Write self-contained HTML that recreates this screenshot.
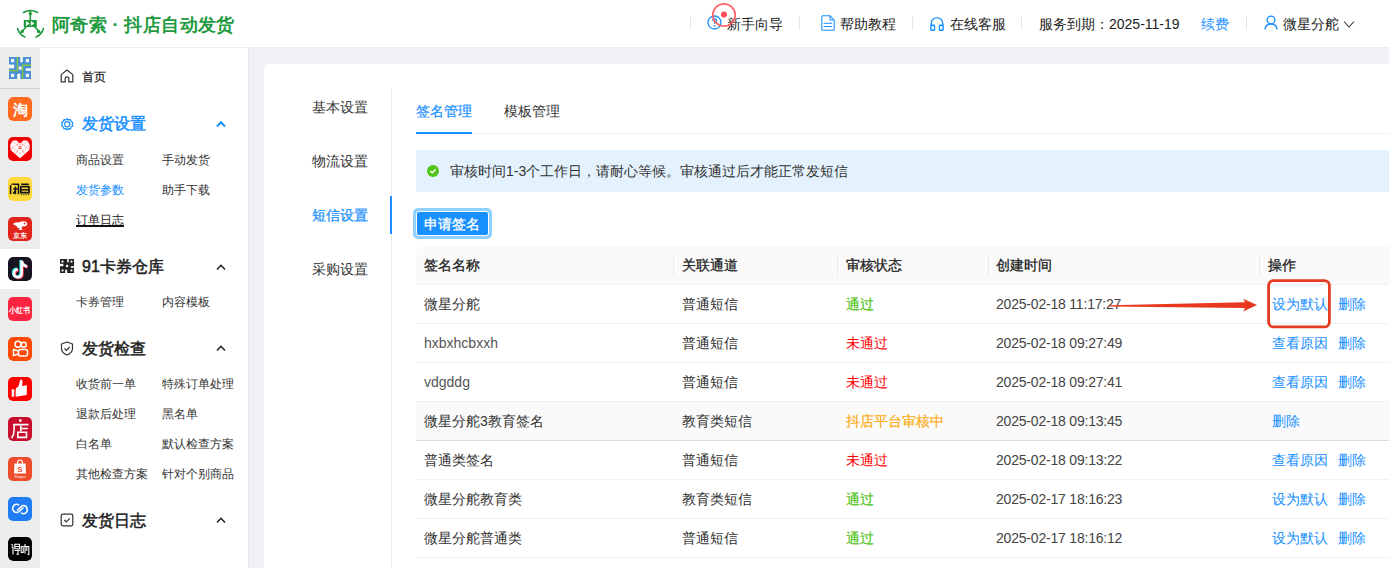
<!DOCTYPE html>
<html><head><meta charset="utf-8">
<style>
*{box-sizing:border-box;margin:0;padding:0}
html,body{width:1389px;height:568px;overflow:hidden;background:#f0f2f5;font-family:"Liberation Sans",sans-serif;color:#333;font-size:14px}
.a{position:absolute;white-space:nowrap;line-height:20px}
#hdr{position:absolute;left:0;top:0;width:1389px;height:48px;background:#fff;color:#222;border-bottom:1px solid #ededed}
#hdr .a{top:14px}
.sep{position:absolute;width:1px;height:13px;top:17px;background:#e4e4e4}
#strip{position:absolute;left:0;top:48px;width:40px;height:520px;background:#ececec}
#side{position:absolute;left:40px;top:48px;width:209px;height:520px;background:#fff;border-right:1px solid #e6e6e6}
#card{position:absolute;left:264px;top:64px;width:1140px;height:520px;background:#fff;border-radius:6px}
.ic{position:absolute;width:24px;height:24px;border-radius:5px;overflow:hidden}
.blue{color:#1890ff}
.sub{font-size:12px}
.grp{font-size:16px;font-weight:400;-webkit-text-stroke:0.5px currentColor}
.th{font-weight:400;color:#222;-webkit-text-stroke:0.3px #222}
.ok{color:#52c41a;-webkit-text-stroke:0.2px #52c41a}
.bad{color:#ff0000}
.pend{color:#faad14;-webkit-text-stroke:0.2px #faad14}
</style></head><body>
<div id="hdr">
  <svg style="position:absolute;left:14px;top:8px" width="34" height="32" viewBox="0 0 34 32">
    <g fill="none" stroke="#1f9a3f" stroke-width="1.6" stroke-linecap="round">
      <path d="M9.5 4.5 Q16.5 0.5 23.5 4.5"/>
      <path d="M16.3 3 V12"/>
      <path d="M12 19 L7 24.5"/>
      <path d="M21 19 L26 24.5"/>
      <path d="M3.5 20.5 Q5.5 27 11 29"/>
      <path d="M29.5 20.5 Q27.5 27 22 29"/>
    </g>
    <circle cx="16.3" cy="5.7" r="1.6" fill="#1f9a3f"/>
    <circle cx="8.2" cy="23.4" r="1.7" fill="#1f9a3f"/>
    <circle cx="24.6" cy="23.4" r="1.7" fill="#1f9a3f"/>
    <rect x="9.8" y="12" width="13" height="7" fill="#1f9a3f"/>
    <path d="M12.1 13.1 L15.6 15.5 L12.1 17.9Z M16.8 13.1 L20.3 15.5 L16.8 17.9Z" fill="#fff"/>
  </svg>
  <div class="a" style="left:52px;top:13px;font-size:18px;line-height:24px;font-weight:bold;color:#1f9a3f;letter-spacing:0.4px">阿奇索 · 抖店自动发货</div>

  <div class="sep" style="left:690px"></div>
  <svg style="position:absolute;left:707px;top:15px" width="15" height="15" viewBox="0 0 15 15"><circle cx="7.5" cy="7.5" r="6.5" fill="none" stroke="#1890ff" stroke-width="1.3"/><path d="M5.4 5.8 Q5.6 3.8 7.5 3.8 Q9.5 3.8 9.5 5.6 Q9.5 6.8 7.5 7.6 V8.8" fill="none" stroke="#1890ff" stroke-width="1.3"/><circle cx="7.5" cy="10.9" r="0.8" fill="#1890ff"/></svg>
  <div class="a" style="left:727px;top:14px">新手向导</div>
  <svg style="position:absolute;left:710px;top:1px" width="28" height="28" viewBox="0 0 28 28"><circle cx="14" cy="14" r="11.2" fill="none" stroke="#ff5a5f" stroke-width="1.8" opacity="0.9"/><circle cx="14" cy="13.5" r="3" fill="#ff4d55"/></svg>
  <div class="sep" style="left:799px"></div>
  <svg style="position:absolute;left:821px;top:15px" width="14" height="16" viewBox="0 0 14 16"><path d="M1.5 0.8 H9 L13.2 5 V14.2 Q13.2 15.2 12.2 15.2 H1.8 Q0.8 15.2 0.8 14.2 V1.8 Q0.8 0.8 1.8 0.8 Z" fill="none" stroke="#1890ff" stroke-width="1.05" stroke-linejoin="round"/><path d="M9 0.8 V4 Q9 5 10 5 H13.2" fill="none" stroke="#1890ff" stroke-width="1.05"/><path d="M2.6 8.3 H11 M2.6 11.5 H11" stroke="#1890ff" stroke-width="1"/></svg>
  <div class="a" style="left:840px;top:14px">帮助教程</div>
  <div class="sep" style="left:912px"></div>
  <svg style="position:absolute;left:930px;top:17px" width="14" height="14" viewBox="0 0 14 14"><path d="M1.3 9 V6.8 Q1.3 0.9 7 0.9 Q12.7 0.9 12.7 6.8 V9" fill="none" stroke="#1890ff" stroke-width="1.4"/><rect x="0.9" y="8.2" width="3.6" height="5" rx="0.5" fill="none" stroke="#1890ff" stroke-width="1.4"/><rect x="9.5" y="8.2" width="3.6" height="5" rx="0.5" fill="none" stroke="#1890ff" stroke-width="1.4"/></svg>
  <div class="a" style="left:950px;top:14px">在线客服</div>
  <div class="sep" style="left:1021px"></div>
  <div class="a" style="left:1039px;top:14px">服务到期：2025-11-19</div>
  <div class="a blue" style="left:1201px;top:14px">续费</div>
  <div class="sep" style="left:1246px"></div>
  <svg style="position:absolute;left:1264px;top:15px" width="14" height="15" viewBox="0 0 14 15"><circle cx="7" cy="5" r="3.9" fill="none" stroke="#1890ff" stroke-width="1.4"/><path d="M1 14.5 Q1.5 9 7 9 Q12.5 9 13 14.5" fill="none" stroke="#1890ff" stroke-width="1.4"/></svg>
  <div class="a" style="left:1283px;top:14px">微星分舵</div>
  <svg style="position:absolute;left:1343px;top:20px" width="12" height="9" viewBox="0 0 12 9"><path d="M1 1.5 L6 7 L11 1.5" fill="none" stroke="#333" stroke-width="1.1"/></svg>
</div>

<div id="strip">
  <div style="position:absolute;left:0;top:40px;width:40px;height:1px;background:#d2d2d2"></div>
  <div style="position:absolute;left:0;top:201px;width:40px;height:40px;background:#fff"></div>
  <svg style="position:absolute;left:9px;top:9px" width="22" height="22" viewBox="0 0 22 22">
    <rect width="22" height="22" fill="#4b8fd8"/>
    <g fill="#fbf8f2">
      <rect x="2" y="2" width="3.2" height="3.2"/><rect x="16.8" y="2" width="3.2" height="3.2"/><rect x="2" y="16.8" width="3.2" height="3.2"/><rect x="16.8" y="16.8" width="3.2" height="3.2"/>
      <rect x="11.3" y="0" width="2.5" height="5.2"/><rect x="0" y="7.6" width="5.2" height="3.7"/><rect x="16.8" y="11.3" width="5.2" height="2.5"/><rect x="8.2" y="16.8" width="3.1" height="5.2"/>
      <rect x="9.6" y="9.4" width="3.2" height="3.4" fill="#e9ecee"/>
    </g>
    <g stroke="#7cc442" stroke-width="1.5" fill="none">
      <path d="M8.4 0 V13.5 H0"/><path d="M22 8.2 H13.6 V22"/>
    </g>
  </svg>
  <!-- taobao -->
  <svg class="ic" style="left:8px;top:49px" width="24" height="24" viewBox="0 0 24 24"><rect width="24" height="24" rx="5" fill="#ff6a1e"/><text x="12" y="17.8" font-size="15" font-weight="bold" fill="#fff" text-anchor="middle">淘</text></svg>
  <!-- pdd -->
  <svg class="ic" style="left:8px;top:89px" width="24" height="24" viewBox="0 0 24 24"><rect width="24" height="24" rx="4" fill="#f00000"/><path d="M12 6.5 L8.5 3.3 L4.5 3.8 L2.2 8 L2.6 13 L12 21.2 L21.4 13 L21.8 8 L19.5 3.8 L15.5 3.3 Z" fill="#fff"/><g stroke="#f00000" stroke-width="0.7" opacity="0.7" fill="none"><path d="M2.5 8 L12 17 L21.5 8 M4.5 3.8 L12 11 L19.5 3.8 M2.6 13 L12 5 L21.4 13 M8.5 3.3 L16.5 17 M15.5 3.3 L7.5 17" stroke-dasharray="1.2 1"/></g><rect x="10.8" y="9.6" width="2.4" height="2.4" fill="#f00000" opacity="0.8"/><rect x="11.4" y="10.2" width="1.2" height="1.2" fill="#fff"/></svg>
  <!-- xianyu -->
  <svg class="ic" style="left:8px;top:129px" width="24" height="24" viewBox="0 0 24 24"><rect width="24" height="24" rx="4" fill="#ffd83c"/><g fill="none" stroke="#111" stroke-width="1.6"><path d="M2.6 8.2 V17.2"/><path d="M3.6 6.8 L4.4 7.6"/><path d="M5 7.3 H10.5 V17.2"/><path d="M5.2 12 H9.7 M7.4 9.6 V17.2 M5.2 16.6 L7.4 13.8"/><path d="M13.2 7.4 H20.8"/><path d="M12.8 9.8 H21 V15.6 H12.8 Z M12.8 12.7 H21"/></g><path d="M13 17.7 H21" stroke="#111" stroke-width="0.9" stroke-dasharray="1.2 1.1"/></svg>
  <!-- jd -->
  <svg class="ic" style="left:8px;top:169px" width="24" height="24" viewBox="0 0 24 24"><rect width="24" height="24" rx="4" fill="#e1251b"/><path d="M5 7 Q7 4.5 11 5.5 Q14 3.5 17 4.5 Q20 5.5 19 8 Q17 10 14 9.5 L13.5 12 L15 13 H10.5 L12 11.5 Q9 11 8 8.5 Q6.5 8.5 5 7Z" fill="#fff"/><circle cx="16.5" cy="6.5" r="0.9" fill="#e1251b"/><text x="12" y="21.3" font-size="6.8" font-weight="bold" fill="#fff" text-anchor="middle" letter-spacing="-0.3">京东</text></svg>
  <!-- tiktok -->
  <svg class="ic" style="left:8px;top:209px" width="24" height="24" viewBox="0 0 24 24"><rect width="24" height="24" rx="5" fill="#171320"/><g fill="none" stroke-width="2.6"><path d="M13.6 3.8 V16.3 Q13.6 20.2 9.8 20.2 Q6 20.2 6 16.3 Q6 12.5 9.8 12.5 M13.6 3.8 Q14.3 8.6 19 9.4" stroke="#25f4ee" transform="translate(-0.9,-0.7)"/><path d="M13.6 3.8 V16.3 Q13.6 20.2 9.8 20.2 Q6 20.2 6 16.3 Q6 12.5 9.8 12.5 M13.6 3.8 Q14.3 8.6 19 9.4" stroke="#fe2c55" transform="translate(0.9,0.7)"/><path d="M13.6 3.8 V16.3 Q13.6 20.2 9.8 20.2 Q6 20.2 6 16.3 Q6 12.5 9.8 12.5 M13.6 3.8 Q14.3 8.6 19 9.4" stroke="#fff"/></g></svg>
  <!-- xhs -->
  <svg class="ic" style="left:8px;top:249px" width="24" height="24" viewBox="0 0 24 24"><rect width="24" height="24" rx="4" fill="#ff2442"/><text x="1.3" y="15.6" font-size="8.2" font-weight="bold" fill="#fff" textLength="21.3" lengthAdjust="spacingAndGlyphs">小红书</text></svg>
  <!-- kuaishou -->
  <svg class="ic" style="left:8px;top:289px" width="24" height="24" viewBox="0 0 24 24"><rect width="24" height="24" rx="5" fill="#ff4906"/><g fill="none" stroke="#fff" stroke-width="1.5"><circle cx="10" cy="7.3" r="3"/><circle cx="15.7" cy="7.8" r="2.5"/><rect x="10.5" y="12.5" width="9" height="6.5" rx="2"/><path d="M10.5 14 L5.5 12.5 V18.5 L10.5 17"/></g></svg>
  <!-- thumbs -->
  <svg class="ic" style="left:8px;top:329px" width="24" height="24" viewBox="0 0 24 24"><rect width="24" height="24" rx="4" fill="#fe0000"/><path d="M3.7 12.2 H5.9 V19.7 H3.7Z" fill="#fff"/><path d="M6.6 12.2 H7.6 V19.6 H6.6Z" fill="#fff" opacity="0.6"/><path d="M8 11.3 L10.3 9.5 Q11.4 7 11.9 3.6 Q12.5 2.2 13.9 2.6 Q14.8 3.3 14.4 6 L14.1 8.9 L18.9 8.2 L18.7 17.9 L8.1 19.7 Z" fill="#fff"/></svg>
  <!-- dian -->
  <svg class="ic" style="left:8px;top:369px" width="24" height="24" viewBox="0 0 24 24"><rect width="24" height="24" rx="4" fill="#c8102e"/><circle cx="12.3" cy="3.6" r="1.4" fill="#fff"/><g fill="none" stroke="#fff" stroke-width="1.6"><path d="M5.2 7.6 H20.5"/><path d="M6.1 7.6 V13 Q6.1 18 3.6 21.2"/><path d="M12.8 8.5 V14.5 M12.8 11.5 H20"/><path d="M9.8 15.3 H18.5 V20.4 H9.8 Z"/></g></svg>
  <!-- shopee -->
  <svg class="ic" style="left:8px;top:409px" width="24" height="24" viewBox="0 0 24 24"><rect width="24" height="24" rx="4" fill="#ee4d2d"/><path d="M6.5 6.5 H17.5 L18 16.5 H6Z" fill="#fff"/><path d="M9.5 6.5 Q9.5 3 12 3 Q14.5 3 14.5 6.5" fill="none" stroke="#fff" stroke-width="1.2"/><text x="12" y="14.8" font-size="8" fill="#ee4d2d" text-anchor="middle" font-weight="bold">S</text><text x="12" y="20.8" font-size="3.2" fill="#fff" text-anchor="middle">Shopee</text></svg>
  <!-- blue -->
  <svg class="ic" style="left:8px;top:449px" width="24" height="24" viewBox="0 0 24 24"><rect width="24" height="24" rx="4" fill="#1f7cf4"/><g fill="none" stroke="#fff" stroke-width="1.6"><path d="M11 8.2 Q8.5 6.5 6.5 7.8 Q4 9.5 5 12.8 Q6 15.8 9 15.5 L10.5 15"/><path d="M13 15.8 Q15.5 17.5 17.5 16.2 Q20 14.5 19 11.2 Q18 8.2 15 8.5 L13.5 9"/><path d="M9 13.5 L14 8.8 M10.5 15.2 L15.5 10.5"/></g></svg>
  <!-- dewu -->
  <svg class="ic" style="left:8px;top:489px" width="24" height="24" viewBox="0 0 24 24"><rect width="24" height="24" rx="5" fill="#000"/><g fill="none" stroke="#fff" stroke-width="1.1"><path d="M3.5 7.3 L5 8.5 M3.3 10 H5 V17.5"/><path d="M6.8 7.3 H11.5 V11.7 H6.8 Z M6.8 9.5 H11.5 M6.5 13.5 H12 M10 12.5 V17.5 L8.5 17"/><path d="M13.2 9.5 V15.5 H15.2 V9.5 Z M17 7 V16.5 M16 9.5 H20.8 V17.5 L19.5 17.2 M18.8 9.5 V14"/></g></svg>
</div>
<div id="side"></div>
<div id="menu">
  <svg style="position:absolute;left:60px;top:69px" width="14" height="14" viewBox="0 0 14 14"><path d="M1.2 12.8 V5.6 L7 1 L12.8 5.6 V12.8 H8.8 V9.6 Q8.8 7.8 7 7.8 Q5.2 7.8 5.2 9.6 V12.8 Z" fill="none" stroke="#333" stroke-width="1.2" stroke-linejoin="round"/></svg>
  <div class="a sub" style="left:82px;top:67px;color:#222;-webkit-text-stroke:0.25px #222">首页</div>

  <svg style="position:absolute;left:61px;top:118px" width="12.5" height="12.5" viewBox="0 0 14 14"><path d="M7 0.8 L8.6 2.2 L10.7 1.9 L11.3 4 L13.2 5 L12.5 7 L13.2 9 L11.3 10 L10.7 12.1 L8.6 11.8 L7 13.2 L5.4 11.8 L3.3 12.1 L2.7 10 L0.8 9 L1.5 7 L0.8 5 L2.7 4 L3.3 1.9 L5.4 2.2 Z" fill="none" stroke="#1890ff" stroke-width="1.35" stroke-linejoin="round"/><circle cx="7" cy="7" r="2.9" fill="none" stroke="#1890ff" stroke-width="1.3"/></svg>
  <div class="a grp blue" style="left:82px;top:114px">发货设置</div>
  <svg style="position:absolute;left:216px;top:120px" width="10" height="8" viewBox="0 0 10 8"><path d="M1 6.5 L5 2.3 L9 6.5" fill="none" stroke="#1890ff" stroke-width="2"/></svg>
  <div class="a sub" style="left:76px;top:150px">商品设置</div>
  <div class="a sub" style="left:162px;top:150px">手动发货</div>
  <div class="a sub blue" style="left:76px;top:180px">发货参数</div>
  <div class="a sub" style="left:162px;top:180px">助手下载</div>
  <div class="a sub" style="left:76px;top:210px;color:#222">订单日志</div>
  <div style="position:absolute;left:76px;top:225px;width:48px;height:1.5px;background:#111"></div>

  <svg style="position:absolute;left:60px;top:259px" width="14" height="14" viewBox="0 0 22 22">
    <rect width="22" height="22" fill="#222"/>
    <g fill="#fff">
      <rect x="2.5" y="2.5" width="3" height="3"/><rect x="16.5" y="2.5" width="3" height="3"/><rect x="2.5" y="16.5" width="3" height="3"/><rect x="16.5" y="16.5" width="3" height="3"/>
      <rect x="11.3" y="0" width="2.5" height="5.2"/><rect x="0" y="7.6" width="5.2" height="3.7"/><rect x="16.8" y="11.3" width="5.2" height="2.5"/><rect x="8.2" y="16.8" width="3.1" height="5.2"/>
      <rect x="9.4" y="9.2" width="3.4" height="3.6"/>
    </g>
  </svg>
  <div class="a grp" style="left:82px;top:257px;color:#222">91卡券仓库</div>
  <svg style="position:absolute;left:216px;top:263px" width="10" height="8" viewBox="0 0 10 8"><path d="M1 6.5 L5 2.3 L9 6.5" fill="none" stroke="#222" stroke-width="1.6"/></svg>
  <div class="a sub" style="left:76px;top:292px">卡券管理</div>
  <div class="a sub" style="left:162px;top:292px">内容模板</div>

  <svg style="position:absolute;left:60px;top:341px" width="14" height="15" viewBox="0 0 14 15"><path d="M7 1 L12.5 3 V7.5 Q12.5 11.8 7 14 Q1.5 11.8 1.5 7.5 V3 Z" fill="none" stroke="#333" stroke-width="1.2" stroke-linejoin="round"/><path d="M4.5 7.5 L6.4 9.3 L9.6 6" fill="none" stroke="#333" stroke-width="1.2"/></svg>
  <div class="a grp" style="left:82px;top:339px;color:#222">发货检查</div>
  <svg style="position:absolute;left:216px;top:344px" width="10" height="8" viewBox="0 0 10 8"><path d="M1 6.5 L5 2.3 L9 6.5" fill="none" stroke="#222" stroke-width="1.6"/></svg>
  <div class="a sub" style="left:76px;top:374px">收货前一单</div>
  <div class="a sub" style="left:162px;top:374px">特殊订单处理</div>
  <div class="a sub" style="left:76px;top:404px">退款后处理</div>
  <div class="a sub" style="left:162px;top:404px">黑名单</div>
  <div class="a sub" style="left:76px;top:434px">白名单</div>
  <div class="a sub" style="left:162px;top:434px">默认检查方案</div>
  <div class="a sub" style="left:76px;top:464px">其他检查方案</div>
  <div class="a sub" style="left:162px;top:464px">针对个别商品</div>

  <svg style="position:absolute;left:60px;top:513px" width="14" height="14" viewBox="0 0 14 14"><rect x="1.2" y="1.2" width="11.6" height="11.6" rx="1.5" fill="none" stroke="#333" stroke-width="1.2"/><path d="M4.3 7 L6.3 9 L9.8 5.3" fill="none" stroke="#333" stroke-width="1.2"/></svg>
  <div class="a grp" style="left:82px;top:511px;color:#222">发货日志</div>
  <svg style="position:absolute;left:216px;top:516px" width="10" height="8" viewBox="0 0 10 8"><path d="M1 6.5 L5 2.3 L9 6.5" fill="none" stroke="#222" stroke-width="1.6"/></svg>
</div>
<div id="card"></div>
<div id="content">
  <div class="a" style="left:312px;top:97px">基本设置</div>
  <div class="a" style="left:312px;top:151px">物流设置</div>
  <div class="a blue" style="left:312px;top:205px;-webkit-text-stroke:0.25px #1890ff">短信设置</div>
  <div class="a" style="left:312px;top:259px">采购设置</div>
  <div style="position:absolute;left:391px;top:88px;width:1px;height:480px;background:#ebebeb"></div>
  <div style="position:absolute;left:390px;top:196px;width:2px;height:38px;background:#1890ff"></div>

  <div class="a blue" style="left:416px;top:101px;-webkit-text-stroke:0.2px #1890ff">签名管理</div>
  <div class="a" style="left:504px;top:101px">模板管理</div>
  <div style="position:absolute;left:416px;top:133px;width:973px;height:1px;background:#f0f0f0"></div>
  <div style="position:absolute;left:416px;top:132px;width:56px;height:2px;background:#1890ff"></div>

  <div style="position:absolute;left:416px;top:150px;width:973px;height:42px;background:#e3f2fd"></div>
  <svg style="position:absolute;left:427px;top:165px" width="12" height="12" viewBox="0 0 12 12"><circle cx="6" cy="6" r="6" fill="#52c41a"/><path d="M3.4 6.1 L5.2 7.8 L8.6 4.4" fill="none" stroke="#fff" stroke-width="1.4"/></svg>
  <div class="a" style="left:450px;top:161px">审核时间1-3个工作日，请耐心等候。审核通过后才能正常发短信</div>

  <div style="position:absolute;left:413px;top:208px;width:79px;height:31px;border-radius:5px;background:#91d0ff"></div>
  <div style="position:absolute;left:416px;top:211px;width:73px;height:25px;border-radius:3px;background:#1890ff;border:1px solid #fff"></div>
  <div class="a" style="left:424px;top:214px;color:#fff;-webkit-text-stroke:0.3px #fff">申请签名</div>

  <div style="position:absolute;left:416px;top:246px;width:973px;height:39px;background:#fafafa;border-top-left-radius:8px;border-bottom:1px solid #f0f0f0"></div>
  <div style="position:absolute;left:673px;top:254px;width:1px;height:22px;background:#ececec"></div>
  <div style="position:absolute;left:837px;top:254px;width:1px;height:22px;background:#ececec"></div>
  <div style="position:absolute;left:988px;top:254px;width:1px;height:22px;background:#ececec"></div>
  <div style="position:absolute;left:1259px;top:254px;width:1px;height:22px;background:#ececec"></div>
  <div class="a th" style="left:424px;top:255px">签名名称</div>
  <div class="a th" style="left:682px;top:255px">关联通道</div>
  <div class="a th" style="left:846px;top:255px">审核状态</div>
  <div class="a th" style="left:996px;top:255px">创建时间</div>
  <div class="a th" style="left:1268px;top:255px">操作</div>
  <div style="position:absolute;left:416px;top:285px;width:973px;height:39px;background:#fff;border-bottom:1px solid #f0f0f0"></div>
  <div class="a" style="left:424px;top:294px">微星分舵</div>
  <div class="a" style="left:682px;top:294px">普通短信</div>
  <div class="a ok" style="left:846px;top:294px">通过</div>
  <div class="a" style="left:996px;top:294px;color:#444;letter-spacing:-0.2px">2025-02-18 11:17:27</div>
  <div class="a blue" style="left:1272px;top:294px">设为默认</div>
  <div class="a blue" style="left:1338px;top:294px">删除</div>
  <div style="position:absolute;left:416px;top:324px;width:973px;height:39px;background:#fff;border-bottom:1px solid #f0f0f0"></div>
  <div class="a" style="left:424px;top:333px;color:#555">hxbxhcbxxh</div>
  <div class="a" style="left:682px;top:333px">普通短信</div>
  <div class="a bad" style="left:846px;top:333px">未通过</div>
  <div class="a" style="left:996px;top:333px;color:#444;letter-spacing:-0.2px">2025-02-18 09:27:49</div>
  <div class="a blue" style="left:1272px;top:333px">查看原因</div>
  <div class="a blue" style="left:1338px;top:333px">删除</div>
  <div style="position:absolute;left:416px;top:363px;width:973px;height:39px;background:#fff;border-bottom:1px solid #f0f0f0"></div>
  <div class="a" style="left:424px;top:372px;color:#555">vdgddg</div>
  <div class="a" style="left:682px;top:372px">普通短信</div>
  <div class="a bad" style="left:846px;top:372px">未通过</div>
  <div class="a" style="left:996px;top:372px;color:#444;letter-spacing:-0.2px">2025-02-18 09:27:41</div>
  <div class="a blue" style="left:1272px;top:372px">查看原因</div>
  <div class="a blue" style="left:1338px;top:372px">删除</div>
  <div style="position:absolute;left:416px;top:402px;width:973px;height:39px;background:#fafafa;border-bottom:1px solid #dddddd"></div>
  <div class="a" style="left:424px;top:411px">微星分舵3教育签名</div>
  <div class="a" style="left:682px;top:411px">教育类短信</div>
  <div class="a pend" style="left:846px;top:411px">抖店平台审核中</div>
  <div class="a" style="left:996px;top:411px;color:#444;letter-spacing:-0.2px">2025-02-18 09:13:45</div>
  <div class="a blue" style="left:1272px;top:411px">删除</div>
  <div style="position:absolute;left:416px;top:441px;width:973px;height:39px;background:#fff;border-bottom:1px solid #f0f0f0"></div>
  <div class="a" style="left:424px;top:450px">普通类签名</div>
  <div class="a" style="left:682px;top:450px">普通短信</div>
  <div class="a bad" style="left:846px;top:450px">未通过</div>
  <div class="a" style="left:996px;top:450px;color:#444;letter-spacing:-0.2px">2025-02-18 09:13:22</div>
  <div class="a blue" style="left:1272px;top:450px">查看原因</div>
  <div class="a blue" style="left:1338px;top:450px">删除</div>
  <div style="position:absolute;left:416px;top:480px;width:973px;height:39px;background:#fff;border-bottom:1px solid #f0f0f0"></div>
  <div class="a" style="left:424px;top:489px">微星分舵教育类</div>
  <div class="a" style="left:682px;top:489px">教育类短信</div>
  <div class="a ok" style="left:846px;top:489px">通过</div>
  <div class="a" style="left:996px;top:489px;color:#444;letter-spacing:-0.2px">2025-02-17 18:16:23</div>
  <div class="a blue" style="left:1272px;top:489px">设为默认</div>
  <div class="a blue" style="left:1338px;top:489px">删除</div>
  <div style="position:absolute;left:416px;top:519px;width:973px;height:39px;background:#fff;border-bottom:1px solid #f0f0f0"></div>
  <div class="a" style="left:424px;top:528px">微星分舵普通类</div>
  <div class="a" style="left:682px;top:528px">普通短信</div>
  <div class="a ok" style="left:846px;top:528px">通过</div>
  <div class="a" style="left:996px;top:528px;color:#444;letter-spacing:-0.2px">2025-02-17 18:16:12</div>
  <div class="a blue" style="left:1272px;top:528px">设为默认</div>
  <div class="a blue" style="left:1338px;top:528px">删除</div>
</div>
<svg style="position:absolute;left:1100px;top:275px" width="240" height="60" viewBox="1100 275 240 60">
  <path d="M1109 305.2 L1245 302.3 L1243.3 298.8 L1257 304.9 L1243.3 311.4 L1245 307.9 L1109 306.4 Z" fill="#e8391f"/>
  <rect x="1268.6" y="280.6" width="60.8" height="46.3" rx="5" fill="none" stroke="#e63a21" stroke-width="2.8"/>
</svg>

</body></html>
